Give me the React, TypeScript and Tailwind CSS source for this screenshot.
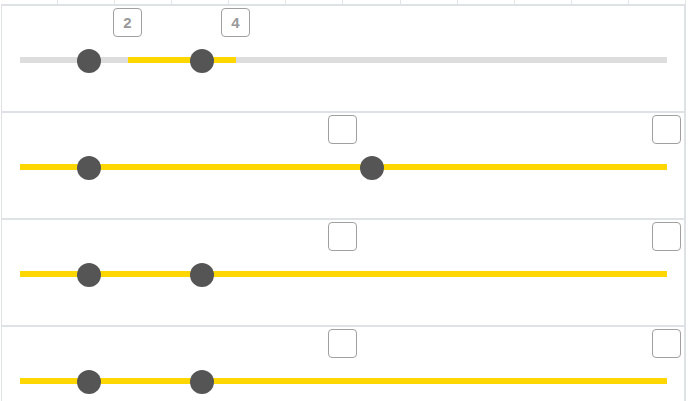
const ticks = Array.from({ length: 12 }, (_, i) => i);

type Row = {
  labels: { left: number; text: string }[];
  thumbs: number[];
  fill: { left: number; width: number } | null;
  full: boolean;
};

const rows: Row[] = [
  {
    labels: [
      { left: 93, text: "2" },
      { left: 201, text: "4" },
    ],
    thumbs: [57, 170],
    fill: { left: 108, width: 108 },
    full: false,
  },
  {
    labels: [
      { left: 308, text: "" },
      { left: 632, text: "" },
    ],
    thumbs: [57, 339.5],
    fill: null,
    full: true,
  },
  {
    labels: [
      { left: 308, text: "" },
      { left: 632, text: "" },
    ],
    thumbs: [57, 170],
    fill: null,
    full: true,
  },
  {
    labels: [
      { left: 308, text: "" },
      { left: 632, text: "" },
    ],
    thumbs: [57, 170],
    fill: null,
    full: true,
  },
];

function Slider({ row }: { row: Row }) {
  return (
    <div className="flex h-[107px] shrink-0 flex-col border-b-2 border-[#dee2e6] pl-[18px] pt-0.5">
      <div className="relative h-[29px] w-[647px] shrink-0">
        {row.labels.map((l, i) => (
          <div
            key={i}
            style={{ left: l.left }}
            className="absolute top-0 flex h-[29px] w-[29px] items-center justify-center rounded-[4px] border border-[#a0a0a0] bg-white text-[15px] font-bold leading-none text-[#999]"
          >
            {l.text}
          </div>
        ))}
      </div>
      <div
        className={`relative mt-[19.5px] h-[6.5px] w-[647px] shrink-0 ${
          row.full ? "bg-[#ffd700]" : "bg-[#dddddd]"
        }`}
      >
        {row.fill && (
          <div
            style={{ left: row.fill.left, width: row.fill.width }}
            className="absolute top-0 h-full bg-[#ffd700]"
          />
        )}
        {row.thumbs.map((t, i) => (
          <div
            key={i}
            style={{ left: t }}
            className="absolute -top-[8px] h-6 w-6 rounded-full bg-[#555555]"
          />
        ))}
      </div>
    </div>
  );
}

export default function App() {
  return (
    <div
      className="h-[401px] w-[688px] overflow-hidden bg-white"
      style={{ fontFamily: '"Liberation Sans", Arial, sans-serif' }}
    >
      <div className="ml-px flex w-[685px] flex-col">
        <div className="grid h-1 shrink-0 grid-cols-12">
          {ticks.map((t) => (
            <div key={t} className="border-r border-[#e3e6e9]" />
          ))}
        </div>
        <div className="flex flex-col border-t-2 border-l border-r-2 border-[#dee2e6]">
          {rows.map((r, i) => (
            <Slider key={i} row={r} />
          ))}
        </div>
      </div>
    </div>
  );
}
